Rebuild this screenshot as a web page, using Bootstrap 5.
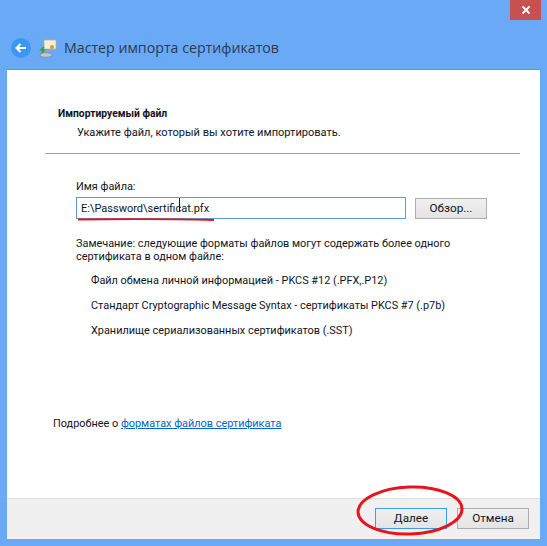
<!DOCTYPE html>
<html lang="ru">
<head>
  <meta charset="UTF-8" />
  <title>Мастер импорта сертификатов</title>
  <link href="https://cdn.jsdelivr.net/npm/bootstrap@5.3.0/dist/css/bootstrap.min.css" rel="stylesheet" />
  <style>
    body { width: 547px; height: 546px; overflow: hidden; background: #69a9f5; position: relative; font-family: Roboto, "Noto Sans", sans-serif; font-size: 10.9px; color: #10141e; line-height: 13px; }
    .close-box { width: 31px; height: 20px; background: #c75050; margin-right: 6px; }
    .title-row { height: 49px; padding: 0 0 11px 11px; }
    .back-btn { width: 20px; height: 20px; border-radius: 50%; background: #3a97f4; }
    .wiz-title { font-family: "Open Sans", sans-serif; font-size: 14.2px; line-height: 20px; color: #2c3a50; margin-left: 7px; }
    .wiz-window { width: 533px; margin-left: 7px; height: 470px; border-top: 1px solid #5a97dc; }
    .wiz-body { height: 428px; background: #fff; position: relative; }
    .wiz-head { padding: 37px 0 0 51px; }
    .wiz-head .wiz-name { font-weight: 700; font-size: 10.3px; }
    .wiz-head .sub-line { margin: 6px 0 0 19px; font-size: 11.05px; }
    .wiz-rule { height: 1px; background: #a0a0a0; margin: 14px 20px 0 38px; }
    .wiz-form { padding: 26px 0 0 69px; }
    .file-input { width: 330px; height: 22px; border: 1px solid #5b9bd5; border-radius: 0; padding: 0 4px; font-size: 11px; line-height: 20px; color: #10141e; box-shadow: none; }
    .win-btn { width: 72px; height: 21px; padding: 0; border: 1px solid #adadad; border-radius: 0; background: linear-gradient(#f0f0f0, #e4e4e4); font-size: 11.7px; line-height: 19px; color: #10141e; }
    .win-btn.is-default { border-color: #3a9bf0; }
    .file-row { margin-top: 4px; gap: 9px; }
    .note-text { margin-top: 18px; }
    .fmt-list { margin: 11px 0 0 15px; padding: 0; list-style: none; }
    .fmt-list li { margin-bottom: 12px; }
    .more-line { position: absolute; left: 46px; top: 347px; }
    .more-line a { color: #0066cc; }
    .wiz-foot { height: 41px; background: #f0f0f0; border-top: 1px solid #dfdfdf; padding: 9px 11px 0 0; gap: 10px; }
    .ink-layer { position: absolute; left: 0; top: 0; pointer-events: none; }
  </style>
</head>
<body>

  <div class="d-flex justify-content-end">
    <div class="close-box d-flex align-items-center justify-content-center">
      <svg width="10" height="10" viewBox="0 0 10 10"><path d="M1.500 1.500l7 7M8.500 1.500l-7 7" stroke="#fff" stroke-width="1.800"/></svg>
    </div>
  </div>

  <div class="title-row d-flex align-items-end">
    <div class="back-btn d-flex align-items-center justify-content-center">
      <svg width="12" height="10" viewBox="0 0 12 10"><path d="M5.500 1L1.500 5l4 4M2 5h9" fill="none" stroke="#fff" stroke-width="2"/></svg>
    </div>
    <svg class="ms-2" width="18" height="20" viewBox="0 0 18 20">
      <path d="M5 2h12v9H5z" fill="#f6efd8" stroke="#b9ae8c" stroke-width=".7"/>
      <circle cx="13" cy="9" r="2" fill="#e8902a"/>
      <path d="M5 9l-3 3h3l-2 3" fill="none" stroke="#3c9c3c" stroke-width="1.600"/>
      <ellipse cx="7" cy="17" rx="6" ry="2.200" fill="#c4c8cc" stroke="#7d848a" stroke-width=".6"/>
    </svg>
    <div class="wiz-title">Мастер импорта сертификатов</div>
  </div>

  <div class="wiz-window">
    <div class="wiz-body">
      <div class="wiz-head">
        <div class="wiz-name">Импортируемый файл</div>
        <div class="sub-line">Укажите файл, который вы хотите импортировать.</div>
      </div>
      <div class="wiz-rule"></div>
      <div class="wiz-form">
        <label for="fileName" class="d-block">Имя файла:</label>
        <div class="d-flex align-items-center file-row">
          <input id="fileName" class="form-control file-input" type="text" value="E:\Password\sertificat.pfx">
          <button type="button" class="btn win-btn">Обзор...</button>
        </div>
        <div class="note-text">Замечание: следующие форматы файлов могут содержать более одного<br>сертификата в одном файле:</div>
        <ul class="fmt-list">
          <li>Файл обмена личной информацией - PKCS #12 (.PFX,.P12)</li>
          <li>Стандарт Cryptographic Message Syntax - сертификаты PKCS #7 (.p7b)</li>
          <li>Хранилище сериализованных сертификатов (.SST)</li>
        </ul>
      </div>
      <div class="more-line">Подробнее о <a href="#">форматах файлов сертификата</a></div>
    </div>
    <div class="wiz-foot d-flex justify-content-end">
      <button type="button" class="btn win-btn is-default">Далее</button>
      <button type="button" class="btn win-btn">Отмена</button>
    </div>
  </div>

  <!-- caret and red marks drawn over the screenshot -->
  <svg class="ink-layer" width="547" height="546" viewBox="0 0 547 546">
    <path d="M179.500 198v14" stroke="#10141e" stroke-width="1"/>
    <path d="M78 219.500C120 219 170 219 214 220" fill="none" stroke="#e8141c" stroke-width="1.800"/>
    <ellipse cx="410" cy="510.500" rx="52" ry="23.500" fill="none" stroke="#e8141c" stroke-width="3" transform="rotate(-2 410 510)"/>
  </svg>

  <script src="https://cdn.jsdelivr.net/npm/bootstrap@5.3.0/dist/js/bootstrap.bundle.min.js"></script>
</body>
</html>
